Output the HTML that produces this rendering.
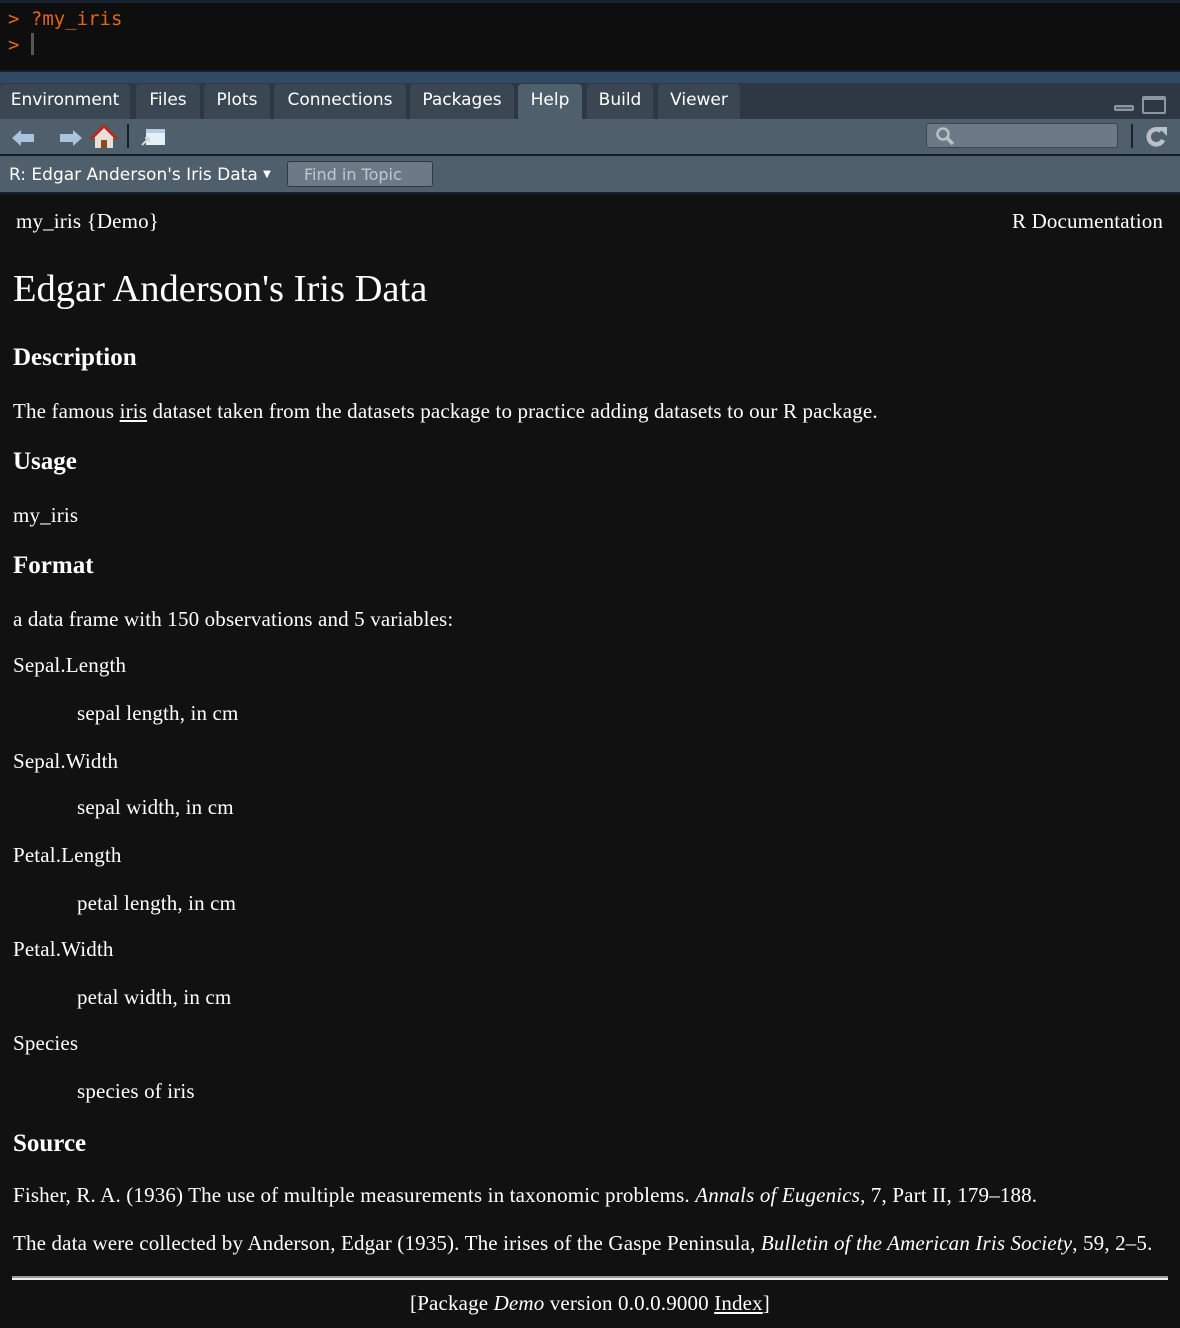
<!DOCTYPE html>
<html><head><meta charset="utf-8"><style>
body{margin:0;width:1180px;height:1328px;background:#111;overflow:hidden;position:relative;font-family:"Liberation Serif",serif;color:#fff}
.a{position:absolute;white-space:nowrap}
.ui{font-family:"DejaVu Sans","Liberation Sans",sans-serif}
.t{font-size:21px;line-height:30px;letter-spacing:0.15px}
.h{font-size:25px;font-weight:bold;line-height:30px}
.tab{position:absolute;top:84px;height:35px;background:#3a4753;border-radius:4px 4px 0 0;color:#fff;font-size:17px;line-height:33px;text-align:center;font-family:"DejaVu Sans","Liberation Sans",sans-serif}
u{text-decoration:underline}
</style></head><body>
<div class="a" style="left:0;top:0;width:1180px;height:70px;background:#0e0e0e"></div>
<div class="a" style="left:0;top:0;width:1180px;height:3px;background:#1a2330"></div>
<div class="a" style="left:8px;top:6px;font-family:'DejaVu Sans Mono','Liberation Mono',monospace;font-size:19px;line-height:26px;color:#e2661a">&gt; ?my_iris<br>&gt; <span style="display:inline-block;width:3px;height:22px;background:#555;vertical-align:-4px"></span></div>
<div class="a" style="left:0;top:70px;width:1180px;height:13px;background:#2f4a62;border-top:2px solid #15202c;box-sizing:border-box"></div>
<div class="a" style="left:0;top:83px;width:1180px;height:36px;background:#2d3844"></div>
<div class="tab" style="left:0;width:130px">Environment</div>
<div class="tab" style="left:136px;width:64px">Files</div>
<div class="tab" style="left:204px;width:66px">Plots</div>
<div class="tab" style="left:274px;width:132px">Connections</div>
<div class="tab" style="left:410px;width:104px">Packages</div>
<div class="tab" style="left:518px;width:64px;background:#4f5f6b">Help</div>
<div class="tab" style="left:587px;width:66px">Build</div>
<div class="tab" style="left:658px;width:82px">Viewer</div>
<div class="a" style="left:1114px;top:105px;width:20px;height:6px;border:2px solid #8a97a3;border-radius:2px;box-sizing:border-box;background:#4f5f6b"></div>
<div class="a" style="left:1142px;top:96px;width:24px;height:18px;border:2px solid #8a97a3;border-top-width:4px;border-radius:2px;box-sizing:border-box"></div>
<div class="a" style="left:0;top:119px;width:1180px;height:36px;background:#4f5f6b"></div>
<svg class="a" style="left:8px;top:124px" width="170" height="28">
<path d="M4 14 L13 6 V10 H26 V18 H13 V22 Z" fill="#a8c4df"/>
<path d="M74 14 L65 6 V10 H52 V18 H65 V22 Z" fill="#a8c4df"/>
<path d="M84 14 L96 2 L108 14 L105 14 L105 24 L87 24 L87 14 Z" fill="#e8e0d8"/>
<path d="M83 15 L96 2 L109 15" stroke="#b52a1a" stroke-width="3" fill="none"/>
<rect x="93" y="16" width="6" height="8" fill="#8a4a1a"/>
<rect x="119" y="0" width="2" height="24" fill="#1a1f25"/>
<rect x="138" y="5" width="19" height="16" fill="#e6eef6"/><rect x="138" y="5" width="19" height="4" fill="#b9cbe0"/>
<path d="M134 21 L141 14 M137 14 H141 V18" stroke="#cfd8e0" stroke-width="2" fill="none"/>
</svg>
<div class="a" style="left:926px;top:123px;width:192px;height:25px;background:#6b7a86;border:1px solid #3a4650;border-radius:3px;box-sizing:border-box"></div>
<svg class="a" style="left:934px;top:126px" width="24" height="20"><circle cx="9" cy="8" r="5.5" stroke="#b8c0c8" stroke-width="2.5" fill="none"/><path d="M13 12 L19 18" stroke="#b8c0c8" stroke-width="3.5"/></svg>
<div class="a" style="left:1131px;top:124px;width:2px;height:24px;background:#1c232a"></div>
<svg class="a" style="left:1144px;top:124px" width="26" height="26"><path d="M19 16 A7.5 7.5 0 1 1 17 7" stroke="#b8c0c8" stroke-width="4.5" fill="none"/><path d="M14 3 L23 3 L23 12 Z" fill="#b8c0c8"/></svg>
<div class="a" style="left:0;top:154px;width:1180px;height:2px;background:#15202c"></div>
<div class="a" style="left:0;top:156px;width:1180px;height:36px;background:#4f5f6b"></div>
<div class="a ui" style="left:9px;top:163px;font-size:17px;line-height:24px;color:#fff">R: Edgar Anderson's Iris Data <span style="font-size:10px;vertical-align:3px">▼</span></div>
<div class="a ui" style="left:287px;top:161px;width:146px;height:26px;background:#6b7a86;border:1px solid #2f3a44;border-radius:3px;box-sizing:border-box;font-size:16px;line-height:25px;color:#c0c8d0;padding-left:16px">Find in Topic</div>
<div class="a" style="left:0;top:192px;width:1180px;height:2px;background:#15202c"></div>

<div class="a t" style="left:16px;top:206px">my_iris {Demo}</div>
<div class="a t" style="right:17px;top:206px">R Documentation</div>
<div class="a" style="left:13px;top:267px;font-size:38.5px;line-height:44px">Edgar Anderson's Iris Data</div>
<div class="a h" style="left:13px;top:343px">Description</div>
<div class="a t" style="left:13px;top:396px">The famous <u>iris</u> dataset taken from the datasets package to practice adding datasets to our R package.</div>
<div class="a h" style="left:13px;top:447px">Usage</div>
<div class="a t" style="left:13px;top:500px">my_iris</div>
<div class="a h" style="left:13px;top:551px">Format</div>
<div class="a t" style="left:13px;top:604px">a data frame with 150 observations and 5 variables:</div>
<div class="a t" style="left:13px;top:650px">Sepal.Length</div>
<div class="a t" style="left:77px;top:698px">sepal length, in cm</div>
<div class="a t" style="left:13px;top:746px">Sepal.Width</div>
<div class="a t" style="left:77px;top:792px">sepal width, in cm</div>
<div class="a t" style="left:13px;top:840px">Petal.Length</div>
<div class="a t" style="left:77px;top:888px">petal length, in cm</div>
<div class="a t" style="left:13px;top:934px">Petal.Width</div>
<div class="a t" style="left:77px;top:982px">petal width, in cm</div>
<div class="a t" style="left:13px;top:1028px">Species</div>
<div class="a t" style="left:77px;top:1076px">species of iris</div>
<div class="a h" style="left:13px;top:1129px">Source</div>
<div class="a t" style="left:13px;top:1180px">Fisher, R. A. (1936) The use of multiple measurements in taxonomic problems. <i>Annals of Eugenics</i>, 7, Part II, 179–188.</div>
<div class="a t" style="left:13px;top:1228px">The data were collected by Anderson, Edgar (1935). The irises of the Gaspe Peninsula, <i>Bulletin of the American Iris Society</i>, 59, 2–5.</div>
<div class="a" style="left:12px;top:1276px;width:1156px;height:2px;background:#999"></div>
<div class="a" style="left:12px;top:1278px;width:1156px;height:2px;background:#eee"></div>
<div class="a t" style="left:0;width:1180px;text-align:center;top:1288px">[Package <i>Demo</i> version 0.0.0.9000 <u>Index</u>]</div>
</body></html>
